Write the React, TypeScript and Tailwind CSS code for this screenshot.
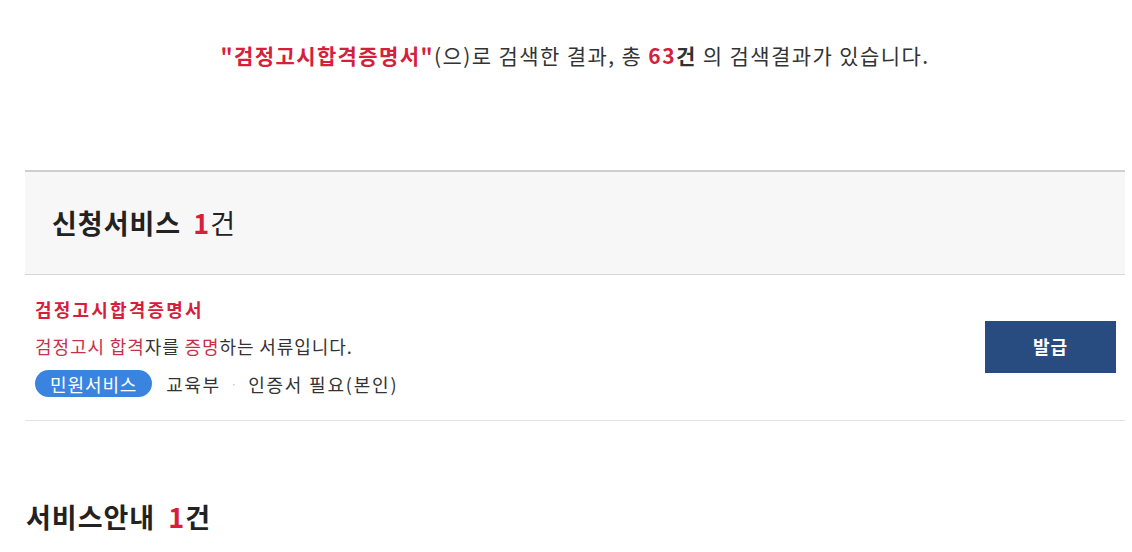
import React from "react";

const font = { fontFamily: '"Noto Sans CJK KR", "Noto Sans", sans-serif' };

export default function App() {
  return (
    <div className="bg-white w-[1132px] h-[552px] overflow-hidden text-[#333]" style={font}>
      <div className="w-[1100px] ml-[25px]">
        <p className="pt-[38px] text-center text-[21px] leading-[34px] text-[#333] tracking-[1.4px]">
          <span className="text-[#d6203b] font-bold">"검정고시합격증명서"</span>(으)로 검색한 결과, 총{" "}
          <span className="text-[#d6203b] font-bold">63</span>
          <span className="font-bold">건</span> 의 검색결과가 있습니다.
        </p>

        <div className="mt-[98px] border-t-2 border-[#cfcfcf] border-b border-b-[#d6d6d6] bg-[#f7f7f7] h-[105px] flex items-center pl-[27px]">
          <h2 className="text-[27px] font-bold text-[#222] tracking-[1px]">
            신청서비스 <span className="text-[#d6203b] ml-[5px]">1</span>
            <span className="font-normal">건</span>
          </h2>
        </div>

        <div className="flex items-center justify-between border-b border-[#e3e3e3] pl-[10px] pr-[9px] pt-[21px] pb-[23px]">
          <div>
            <div className="text-[18px] font-bold text-[#d6203b] leading-[27px] tracking-[2.2px]">검정고시합격증명서</div>
            <div className="text-[18px] leading-[27px] mt-[10px] text-[#333] tracking-[0.9px]">
              <span className="text-[#c8304a]">검정고시 합격</span>자를{" "}
              <span className="text-[#c8304a]">증명</span>하는 서류입니다.
            </div>
            <div className="flex items-center mt-[10px] text-[18px] leading-[26px] tracking-[0.9px]">
              <span className="bg-[#3a84e0] text-white rounded-full px-[15px] h-[27px] flex items-center">민원서비스</span>
              <span className="ml-[14px] tracking-[1.5px]">교육부</span>
              <span className="mx-[10px] text-[#ccc] text-[12px]">·</span>
              <span className="tracking-[1.8px]">인증서 필요(본인)</span>
            </div>
          </div>
          <button className="w-[131px] h-[52px] bg-[#284b80] text-white font-bold text-[18px] tracking-[1px]">발급</button>
        </div>

        <h2 className="mt-[76px] ml-[1px] text-[27px] font-bold text-[#222] tracking-[1px]">
          서비스안내 <span className="text-[#d6203b] ml-[6px]">1</span>건
        </h2>
      </div>
    </div>
  );
}
